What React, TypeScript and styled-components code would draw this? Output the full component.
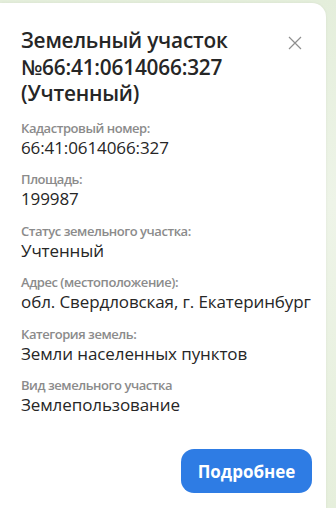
import React from "react";
import styled, { createGlobalStyle } from "styled-components";

const Global = createGlobalStyle`
  html, body { margin: 0; padding: 0; }
  body {
    width: 336px;
    height: 508px;
    overflow: hidden;
    background: linear-gradient(180deg, #e4eedb 0%, #eef4e8 40%, #e6efdc 100%);
    font-family: "Open Sans", "Noto Sans", sans-serif;
  }
`;

const Stage = styled.div`
  padding: 3px 10px 0 0;
  height: 505px;
  box-sizing: border-box;
`;

const Card = styled.div`
  background: #ffffff;
  border-radius: 0 14px 0 0;
  height: 520px;
  box-sizing: border-box;
  padding: 24px 14px 0 21px;
  display: flex;
  flex-direction: column;
  box-shadow: 0 0 3px rgba(0, 0, 0, 0.06);
`;

const Header = styled.div`
  display: flex;
  align-items: flex-start;
  justify-content: space-between;
`;

const Title = styled.h1`
  margin: 0;
  font-size: 20.8px;
  line-height: 26.5px;
  font-weight: 600;
  color: #262626;
  letter-spacing: -0.2px;
`;

const Close = styled.button`
  border: 0;
  background: none;
  padding: 0;
  margin: 9px 10px 0 0;
  width: 14px;
  height: 14px;
  display: flex;
  cursor: pointer;
`;

const Fields = styled.dl`
  margin: 12px 0 0;
  display: flex;
  flex-direction: column;
  gap: 12.5px;
`;

const Field = styled.div`
  display: flex;
  flex-direction: column;
`;

const Label = styled.dt`
  font-size: 13px;
  line-height: 18px;
  font-weight: 600;
  color: #8b8b8b;
  letter-spacing: -0.45px;
`;

const Value = styled.dd`
  margin: 0;
  font-size: 17px;
  line-height: 21px;
  color: #262626;
  letter-spacing: -0.1px;
`;

const Footer = styled.div`
  display: flex;
  justify-content: flex-end;
  margin-top: 34px;
`;

const MoreButton = styled.button`
  width: 131px;
  height: 44px;
  border: 0;
  border-radius: 13px;
  background: #2e7ce4;
  color: #ffffff;
  font-family: inherit;
  font-size: 17px;
  font-weight: 700;
  cursor: pointer;
`;

const fields = [
  ["Кадастровый номер:", "66:41:0614066:327"],
  ["Площадь:", "199987"],
  ["Статус земельного участка:", "Учтенный"],
  ["Адрес (местоположение):", "обл. Свердловская, г. Екатеринбург"],
  ["Категория земель:", "Земли населенных пунктов"],
  ["Вид земельного участка", "Землепользование"],
];

export default function App() {
  return (
    <>
      <Global />
      <Stage>
        <Card>
          <Header>
            <Title>
              Земельный участок
              <br />
              №66:41:0614066:327
              <br />
              (Учтенный)
            </Title>
            <Close aria-label="Закрыть">
              <svg width="14" height="14" viewBox="0 0 14 14">
                <path d="M1 1L13 13M13 1L1 13" stroke="#8f8f8f" strokeWidth="1.2" />
              </svg>
            </Close>
          </Header>
          <Fields>
            {fields.map(([l, v]) => (
              <Field key={l}>
                <Label>{l}</Label>
                <Value>{v}</Value>
              </Field>
            ))}
          </Fields>
          <Footer>
            <MoreButton>Подробнее</MoreButton>
          </Footer>
        </Card>
      </Stage>
    </>
  );
}
